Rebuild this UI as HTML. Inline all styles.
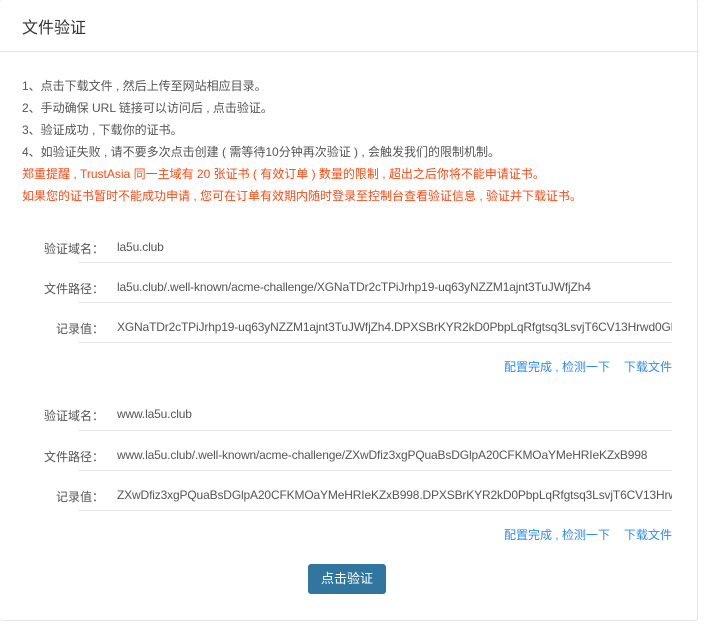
<!DOCTYPE html>
<html><head><meta charset="utf-8"><style>
body{margin:0;width:711px;height:632px;background:#fff;font-family:"Liberation Sans","Noto Sans CJK SC",sans-serif;color:#555;font-size:12px;position:relative;overflow:hidden}
.panel{position:absolute;left:-1px;top:-1px;width:697px;height:620px;border:1px solid #e5e5e5;border-radius:3px}
.hd{position:absolute;left:0;top:0;width:697px;height:51px;border-bottom:1px solid #e5e5e5}
.hd span{position:absolute;left:22px;top:14px;font-size:16px;color:#333}
.ins{position:absolute;left:22px;top:75px;line-height:22px;font-size:12px}
.red{color:#ff4a14}
.lab{position:absolute;width:104px;text-align:right;left:0;font-size:12px}
.val{position:absolute;left:117px;font-size:12px;white-space:nowrap;width:555px;overflow:hidden;letter-spacing:-0.15px}
.ln{position:absolute;left:78px;width:594px;height:1px;background:#e8e8e8}
.lk{position:absolute;right:39px;color:#2d8cf0;font-size:12px}
.lk span{margin-left:14px}
.btn{position:absolute;left:308px;top:564px;width:78px;height:30px;background:#31769f;border-radius:3px;color:#fff;font-size:13px;text-align:center;line-height:30px}
</style></head><body>
<div class="panel"></div>
<div class="hd"><span>文件验证</span></div>
<div class="ins">1、点击下载文件 , 然后上传至网站相应目录。<br>2、手动确保 URL 链接可以访问后 , 点击验证。<br>3、验证成功 , 下载你的证书。<br>4、如验证失败 , 请不要多次点击创建 ( 需等待10分钟再次验证 ) , 会触发我们的限制机制。<br><span class="red">郑重提醒 , TrustAsia 同一主域有 20 张证书 ( 有效订单 ) 数量的限制 , 超出之后你将不能申请证书。</span><br><span class="red">如果您的证书暂时不能成功申请 , 您可在订单有效期内随时登录至控制台查看验证信息 , 验证并下载证书。</span></div>

<div class="lab" style="top:240px">验证域名：</div><div class="val" style="top:240px">la5u.club</div><div class="ln" style="top:262px"></div>
<div class="lab" style="top:280px">文件路径：</div><div class="val" style="top:280px">la5u.club/.well-known/acme-challenge/XGNaTDr2cTPiJrhp19-uq63yNZZM1ajnt3TuJWfjZh4</div><div class="ln" style="top:302px"></div>
<div class="lab" style="top:320px">记录值：</div><div class="val" style="top:320px">XGNaTDr2cTPiJrhp19-uq63yNZZM1ajnt3TuJWfjZh4.DPXSBrKYR2kD0PbpLqRfgtsq3LsvjT6CV13Hrwd0GR</div><div class="ln" style="top:342px"></div>
<div class="lk" style="top:358px">配置完成 , 检测一下<span>下载文件</span></div>

<div class="lab" style="top:407px">验证域名：</div><div class="val" style="top:407px">www.la5u.club</div><div class="ln" style="top:430px"></div>
<div class="lab" style="top:448px">文件路径：</div><div class="val" style="top:448px">www.la5u.club/.well-known/acme-challenge/ZXwDfiz3xgPQuaBsDGlpA20CFKMOaYMeHRIeKZxB998</div><div class="ln" style="top:470px"></div>
<div class="lab" style="top:488px">记录值：</div><div class="val" style="top:488px">ZXwDfiz3xgPQuaBsDGlpA20CFKMOaYMeHRIeKZxB998.DPXSBrKYR2kD0PbpLqRfgtsq3LsvjT6CV13Hrwd0GR</div><div class="ln" style="top:510px"></div>
<div class="lk" style="top:526px">配置完成 , 检测一下<span>下载文件</span></div>

<div class="btn">点击验证</div>
</body></html>
